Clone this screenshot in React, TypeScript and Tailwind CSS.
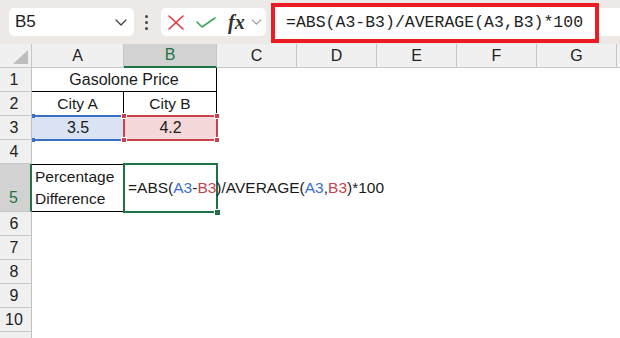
import type { ReactNode } from "react";

const rows = [6, 7, 8, 9, 10];

function Chevron({ className }: { className?: string }) {
  return (
    <svg viewBox="0 0 12 7" className={className} fill="none" aria-hidden="true">
      <path d="M1 1l5 5 5-5" stroke="currentColor" strokeWidth="1.3" strokeLinecap="round" strokeLinejoin="round" />
    </svg>
  );
}

function Toolbar() {
  return (
    <div className="flex h-[44px] items-start bg-[#ece9e7] pl-[9px]">
      <div className="mt-[8px] flex h-[28px] w-[125px] items-center justify-between rounded-[5px] bg-white pl-[6px] pr-[7px]">
        <span className="text-[17px] text-[#1b1b1b]">B5</span>
        <Chevron className="h-[7px] w-[12px] text-[#444]" />
      </div>

      <div className="ml-[10px] mt-[15px] flex w-[4px] flex-col items-center gap-[3px]">
        <span className="h-[3px] w-[3px] rounded-full bg-[#444]" />
        <span className="h-[3px] w-[3px] rounded-full bg-[#444]" />
        <span className="h-[3px] w-[3px] rounded-full bg-[#444]" />
      </div>

      <div className="ml-[13px] mt-[8px] flex h-[28px] w-[105px] items-center rounded-[5px] bg-white pl-[7px]">
        <svg viewBox="0 0 16 15" className="h-[15px] w-[16px]" fill="none" aria-hidden="true">
          <path d="M1 1l14 13M15 1L1 14" stroke="#e3363d" strokeWidth="1.6" strokeLinecap="round" />
        </svg>
        <svg viewBox="0 0 20 11" className="ml-[12px] h-[11px] w-[20px]" fill="none" aria-hidden="true">
          <path d="M1 5l5 5L19 1" stroke="#3ea55b" strokeWidth="1.6" strokeLinecap="round" strokeLinejoin="round" />
        </svg>
        <span className="ml-[12px] font-['Liberation_Serif',serif] text-[20px] font-bold italic leading-none text-[#333]">
          fx
        </span>
        <Chevron className="ml-[6px] h-[6px] w-[11px] text-[#9a9a9a]" />
      </div>

      <div className="ml-[5px] mt-[3px] flex h-[40px] w-[328px] items-center border-4 border-[#ec1c24] bg-white pl-[11px] font-['Liberation_Mono',monospace] text-[16.5px] text-[#1f1f1f]">
        =ABS(A3-B3)/AVERAGE(A3,B3)*100
      </div>
      <div className="mt-[8px] h-[28px] flex-1 bg-white" />
    </div>
  );
}

function ColHead({ label, w, active }: { label: string; w: string; active?: boolean }) {
  return (
    <div
      className={`flex shrink-0 items-center justify-center border-r border-[#c6c6c6] text-[16px] ${w} ${
        active
          ? "border-b-2 border-b-[#1f7244] bg-[#d2d2d2] text-[#1f7244]"
          : "border-b border-b-[#c6c6c6] bg-[#f0f0f0] text-[#222]"
      }`}
    >
      {label}
    </div>
  );
}

function Row({ n, tall, active, children }: { n?: number; tall?: boolean; active?: boolean; children?: ReactNode }) {
  return (
    <div className={`flex ${tall ? "h-[48px]" : "h-[24px]"}`}>
      <div
        className={`flex w-[32px] shrink-0 justify-center border-b border-b-[#c6c6c6] pr-[3px] text-[16px] ${
          active
            ? "items-end border-r-2 border-r-[#1f7244] bg-[#d2d2d2] pb-[1px] text-[#1f7244]"
            : "items-center border-r border-r-[#c0c0c0] bg-[#f0f0f0] text-[#222]"
        }`}
      >
        {n}
      </div>
      {children}
    </div>
  );
}

function Handle({ className }: { className: string }) {
  return <span className={`absolute z-20 h-[6px] w-[6px] border border-white bg-[#c8414b] ${className}`} />;
}

export default function App() {
  return (
    <div className="h-[338px] w-[620px] overflow-hidden bg-white font-['Liberation_Sans',Arial,sans-serif]">
      <Toolbar />

      <div className="flex h-[24px]">
        <div className="flex w-[32px] shrink-0 items-end justify-end border-b border-r border-[#c6c6c6] bg-[#f0f0f0] pb-[3px] pr-[3px]">
          <svg viewBox="0 0 15 14" className="h-[14px] w-[15px]" aria-hidden="true">
            <path d="M15 0v14H0z" fill="#bdbdbd" />
          </svg>
        </div>
        <ColHead label="A" w="w-[92px]" />
        <ColHead label="B" w="w-[93px]" active />
        <ColHead label="C" w="w-[80px]" />
        <ColHead label="D" w="w-[80px]" />
        <ColHead label="E" w="w-[80px]" />
        <ColHead label="F" w="w-[80px]" />
        <ColHead label="G" w="w-[80px]" />
        <ColHead label="" w="w-[40px]" />
      </div>

      <div className="text-[15.5px] text-[#1b1b1b]">
        <Row n={1}>
          <div className="flex w-[185px] items-center justify-center border-b border-r border-black text-[16px]">
            Gasolone Price
          </div>
        </Row>
        <Row n={2}>
          <div className="flex w-[92px] items-center justify-center border-b border-r border-black">City A</div>
          <div className="flex w-[93px] items-center justify-center border-b border-r border-black">City B</div>
        </Row>
        <Row n={3}>
          <div className="relative flex w-[92px] items-center justify-center bg-[#dae3f3] text-[16px]">
            <span className="absolute -top-[1px] left-[1px] right-[3px] z-10 h-[2px] bg-[#3a6fc7]" />
            <span className="absolute -bottom-[1px] left-[1px] right-[3px] z-10 h-[2px] bg-[#3a6fc7]" />
            <span className="absolute -top-[2px] left-0 z-10 h-[4px] w-[3px] bg-[#3a6fc7]" />
            <span className="absolute -bottom-[2px] left-0 z-10 h-[4px] w-[3px] bg-[#3a6fc7]" />
            3.5
          </div>
          <div className="relative flex w-[93px] items-center justify-center bg-[#f5d8da] text-[16px]">
            <span className="absolute -bottom-[1px] -left-[1px] -top-[1px] right-[-1px] z-10 border-2 border-[#c8414b]" />
            <Handle className="-left-[3px] -top-[3px]" />
            <Handle className="-right-[3px] -top-[3px]" />
            <Handle className="-bottom-[3px] -left-[3px]" />
            <Handle className="-bottom-[3px] -right-[3px]" />
            4.2
          </div>
        </Row>
        <Row n={4} />
        <Row n={5} tall active>
          <div className="flex w-[92px] flex-col justify-end border-b border-t border-black pb-[1px] pl-[3px] leading-[22px]">
            <span>Percentage</span>
            <span>Difference</span>
          </div>
          <div className="relative flex w-[93px] items-center whitespace-nowrap pl-[4px]">
            <span className="absolute -bottom-[1px] -left-[1px] -top-[1px] right-[-1px] border-2 border-[#1f7244]" />
            <span className="absolute -bottom-[4px] -right-[4px] z-20 h-[7px] w-[7px] border border-white bg-[#1f7244]" />
            <span className="relative z-10">
              =ABS(<span className="text-[#3a70c8]">A3</span>-<span className="text-[#c8414b]">B3</span>)/AVERAGE(
              <span className="text-[#3a70c8]">A3</span>,<span className="text-[#c8414b]">B3</span>)*100
            </span>
          </div>
        </Row>
        {rows.map((n) => (
          <Row key={n} n={n} />
        ))}
        <Row />
      </div>
    </div>
  );
}
